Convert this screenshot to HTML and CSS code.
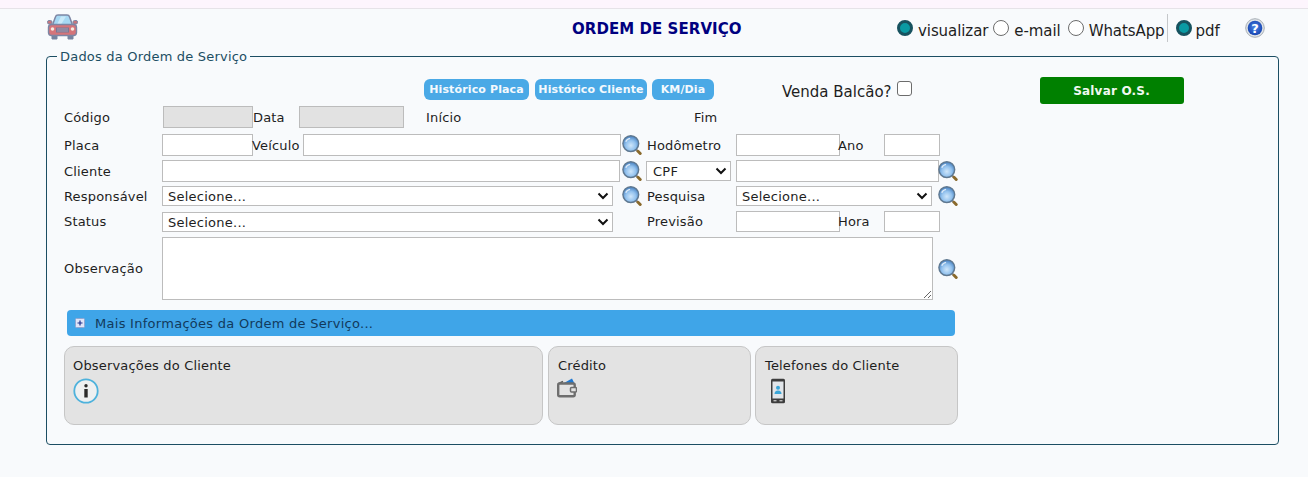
FILE: index.html
```html
<!DOCTYPE html>
<html lang="pt-BR">
<head>
<meta charset="utf-8">
<title>Ordem de Serviço</title>
<link rel="stylesheet" href="styles.css">
</head>
<body>
<svg class="defs" width="0" height="0" aria-hidden="true">
  <defs>
    <radialGradient id="lens" cx="50%" cy="62%" r="58%">
      <stop offset="0" stop-color="#cfe6fa"/>
      <stop offset=".55" stop-color="#93c2ee"/>
      <stop offset="1" stop-color="#4a83c2"/>
    </radialGradient>
    <radialGradient id="helpball" cx="50%" cy="45%" r="55%">
      <stop offset="0" stop-color="#4a86e8"/>
      <stop offset="1" stop-color="#1744b0"/>
    </radialGradient>
    <symbol id="mag" viewBox="0 0 20 20">
      <path d="M13.500 14l2 2" stroke="#8d8d8d" stroke-width="2.400" fill="none"/>
      <path d="M16 16.300l2.200 2.200" stroke="#8a6a2c" stroke-width="3" stroke-linecap="round" fill="none"/>
      <circle cx="8.800" cy="8.600" r="7.900" fill="url(#lens)" stroke="#5f7890" stroke-width="1.400"/>
      <path d="M3.700 6.800a5.600 5.600 0 0 1 4.400-3.400" stroke="#eef7fe" stroke-width="1.300" fill="none" opacity=".85"/>
    </symbol>
  </defs>
</svg>
<div class="strip"></div>
<header class="top">
  <svg class="car" width="31" height="26" viewBox="0 0 31 26">
    <path d="M5 25h5v-4H5zM21 25h5v-4h-5z" fill="#76839f" stroke="#76839f"/>
    <path d="M5.500 11 8.500 2.800Q9 1 11 1h9q2 0 2.500 1.800L25.500 11z" fill="#a6d8f3" stroke="#7d86a4" stroke-width="1.500"/>
    <path d="M10 10.500l4-8h5l-5 8z" fill="#c9e9f9"/>
    <rect x="0.500" y="6.500" width="4.500" height="3.500" rx="1.500" fill="#c8767c" stroke="#7d86a4"/>
    <rect x="26" y="6.500" width="4.500" height="3.500" rx="1.500" fill="#c8767c" stroke="#7d86a4"/>
    <rect x="1.500" y="10.500" width="28" height="11" rx="3" fill="#d4747a" stroke="#7d86a4" stroke-width="1.400"/>
    <rect x="9" y="13.500" width="13" height="5" fill="#7b7693"/>
    <path d="M10 15h11M10 17h11" stroke="#b3a6b6" stroke-width=".8"/>
    <circle cx="5.500" cy="15" r="1.800" fill="#f6eadf"/>
    <circle cx="25.500" cy="15" r="1.800" fill="#f6eadf"/>
  </svg>
  <h1 class="title">ORDEM DE SERVIÇO</h1>
  <div class="modes">
    <label class="mode m-vis"><input type="radio" name="saida" checked>visualizar</label>
    <label class="mode m-mail"><input type="radio" name="saida">e-mail</label>
    <label class="mode m-whats"><input type="radio" name="saida">WhatsApp</label>
    <span class="sep"></span>
    <label class="mode m-pdf"><input type="radio" name="formato" checked>pdf</label>
    <svg class="help" width="20" height="20" viewBox="0 0 20 20">
      <circle cx="10" cy="10" r="9.300" fill="#dfe3e7" stroke="#a8afb6"/>
      <circle cx="10" cy="10" r="7.300" fill="url(#helpball)"/>
      <text x="10" y="14.500" text-anchor="middle" class="help-q">?</text>
    </svg>
  </div>
</header>
<main class="page">
  <fieldset class="box">
    <legend>Dados da Ordem de Serviço</legend>
    <div class="actions">
      <button class="pill p1" type="button">Histórico Placa</button>
      <button class="pill p2" type="button">Histórico Cliente</button>
      <button class="pill p3" type="button">KM/Dia</button>
      <label class="balcao">Venda Balcão?<input type="checkbox"></label>
      <button class="save" type="button">Salvar O.S.</button>
    </div>
    <div class="row r-codigo">
      <label>Código</label><input class="off" disabled>
      <label>Data</label><input class="off" disabled>
      <label class="ini">Início</label><label>Fim</label>
    </div>
    <div class="row r-placa">
      <label>Placa</label><input class="w91">
      <label>Veículo</label><input>
      <svg class="mag"><use href="#mag"/></svg>
      <label class="shift">Hodômetro</label><input class="w104">
      <label class="back">Ano</label><input>
    </div>
    <div class="row r-cliente">
      <label>Cliente</label><input>
      <svg class="mag mag-a"><use href="#mag"/></svg>
      <select class="tiny"><option>CPF</option></select>
      <span></span>
      <input>
      <svg class="mag mag-b"><use href="#mag"/></svg>
    </div>
    <div class="row r-resp">
      <label>Responsável</label><select><option>Selecione...</option></select>
      <span></span>
      <svg class="mag"><use href="#mag"/></svg>
      <label>Pesquisa</label><select><option>Selecione...</option></select>
      <span></span>
      <svg class="mag"><use href="#mag"/></svg>
    </div>
    <div class="row r-status">
      <label class="up">Status</label><select><option>Selecione...</option></select>
      <span></span>
      <label class="up">Previsão</label><input class="w104 tall">
      <label class="up back">Hora</label><input class="tall">
    </div>
    <div class="row r-obs">
      <label>Observação</label><textarea></textarea>
      <span></span>
      <svg class="mag"><use href="#mag"/></svg>
    </div>
    <div class="more">
      <svg class="plus" width="10" height="10" viewBox="0 0 10 10">
        <rect x=".5" y=".5" width="9" height="9" rx="1" fill="#dfe5f8" stroke="#8ea6d2"/>
        <path d="M2.500 5h5M5 2.500v5" stroke="#1c2f8c" stroke-width="1.200"/>
      </svg>
      <span class="more-text">Mais Informações da Ordem de Serviço...</span>
    </div>
    <div class="cards">
      <section class="card c-obs">
        <h2>Observações do Cliente</h2>
        <svg width="26" height="26" viewBox="0 0 26 26">
          <circle cx="13" cy="13" r="11.700" fill="#eef0f1" stroke="#4eb2dc" stroke-width="1.800"/>
          <circle cx="13" cy="7.800" r="1.700" fill="#2b2b2b"/>
          <rect x="11.300" y="11" width="3.400" height="8.500" fill="#2b2b2b"/>
        </svg>
      </section>
      <section class="card c-credit">
        <h2>Crédito</h2>
        <svg width="20" height="20" viewBox="0 0 20 20">
          <path d="M7 5 15 0.500 17.500 5.500H7z" fill="#1f78d1"/>
          <path d="M1 6 6 3.500" stroke="#555" stroke-width="1.600"/>
          <rect x="1.200" y="5.500" width="16.500" height="12.800" rx="1.500" fill="#e3e3e3" stroke="#6e6e6e" stroke-width="2.400"/>
          <rect x="13.500" y="9.500" width="6" height="4.500" rx="1" fill="#e3e3e3" stroke="#6e6e6e" stroke-width="1.500"/>
        </svg>
      </section>
      <section class="card">
        <h2>Telefones do Cliente</h2>
        <svg class="phone" width="16" height="26" viewBox="0 0 16 26">
          <rect x="1" y="0.800" width="14" height="24.400" rx="1.500" fill="#3d3d3d"/>
          <rect x="2.500" y="3.500" width="11" height="17" fill="#e2e6ea"/>
          <circle cx="8" cy="9.800" r="2" fill="#3aa6d8"/>
          <path d="M4.500 16q0-3.500 3.500-3.500t3.500 3.500z" fill="#3aa6d8"/>
          <rect x="3.500" y="22" width="3" height="1.400" fill="#bbb"/>
          <rect x="9.500" y="22" width="3" height="1.400" fill="#bbb"/>
        </svg>
      </section>
    </div>
  </fieldset>
</main>
</body>
</html>
```
FILE: styles.css
```css
* { box-sizing: border-box; }
html, body { margin: 0; height: 100%; }
body {
  background: #f8fafc;
  color: #1e1e1e;
  font: 13px/16px "DejaVu Sans", Verdana, sans-serif;
  letter-spacing: .17px;
  overflow: hidden;
}
.defs { position: absolute; }
.strip { height: 9px; background: #fdf5fd; border-bottom: 1px solid #e6e3e8; }

.top { height: 38px; display: flex; padding-left: 47px; }
.car { margin-top: 5px; flex: none; }
.title {
  flex: none;
  width: 171px;
  margin: 11px 0 0 494px;
  color: #000080;
  font-size: 15px;
  line-height: 18px;
  font-weight: bold;
  letter-spacing: .06px;
  white-space: nowrap;
}
.modes { display: flex; align-items: flex-start; margin-left: 154px; font-size: 15px; line-height: 18px; letter-spacing: -.08px; color: #1e1e1e; }
.mode { display: flex; margin-top: 13px; white-space: nowrap; }
.mode input {
  appearance: none;
  flex: none;
  width: 16px;
  height: 16px;
  margin: -2px 5px 0 0;
  border-radius: 50%;
  border: 1px solid #6c6c6c;
  background: #fff;
}
.mode input:checked { border: 3px solid #17525f; background: #0a9aa3; }
.m-mail { margin-left: 5px; }
.m-whats { margin-left: 7px; }
.sep { width: 1px; height: 28px; margin: 5px 8px 0 2px; background: #c5c7ca; }
.m-pdf input { margin-right: 4px; }
.help { margin: 9px 0 0 25px; flex: none; }
.help-q { font: bold 13px "DejaVu Sans", sans-serif; fill: #fff; }

.page { padding: 0 29px 0 46px; }
.box {
  margin: 0;
  min-width: 0;
  padding: 11px 17px 19px;
  border: 1px solid #1c4e63;
  border-radius: 4px;
}
.box legend {
  margin-left: -7px;
  padding: 1px 3px 0;
  color: #1c4e63;
  line-height: 18px;
  letter-spacing: .2px;
}

.actions { display: flex; align-items: flex-start; height: 29px; }
.pill {
  height: 21px;
  margin: 2px 0 0 0;
  padding: 1px 0 0;
  border: 0;
  border-radius: 6px;
  background: #4aa9e6;
  color: #f4f9fd;
  font: bold 11px/20px "DejaVu Sans", sans-serif;
  letter-spacing: .13px;
  white-space: nowrap;
}
.p1 { width: 105px; margin-left: 360px; }
.p2 { width: 112px; margin-left: 6px; }
.p3 { width: 62px; margin-left: 5px; }
.balcao { display: flex; margin: 6px 0 0 68px; font-size: 15px; line-height: 18px; letter-spacing: 0; white-space: nowrap; }
.balcao input {
  appearance: none;
  width: 15px;
  height: 15px;
  margin: -2px 0 0 5px;
  border: 1px solid #6c6c6c;
  border-radius: 3px;
  background: #fff;
}
.save {
  width: 144px;
  height: 27px;
  margin-left: 128px;
  padding: 1px 0 0;
  border: 0;
  border-radius: 3px;
  background: #008000;
  color: #f0f8f0;
  font: bold 12px/26px "DejaVu Sans", sans-serif;
  letter-spacing: .2px;
}

.row { display: grid; align-items: center; }
.row label { margin-top: 2px; white-space: nowrap; }
.row input, .row select, .row textarea {
  width: 100%;
  margin: 0;
  border: 1px solid #bcbcbc;
  border-radius: 0;
  background: #fff;
  color: #1e1e1e;
  font: 13px/16px "DejaVu Sans", sans-serif;
  letter-spacing: .25px;
}
.row input { height: 22px; padding: 0 3px; }
.row select {
  appearance: none;
  height: 20px;
  padding: 2px 20px 0 5px;
  background: #fff url("data:image/svg+xml,%3Csvg xmlns='http://www.w3.org/2000/svg' width='12' height='8'%3E%3Cpath d='M1.500 1.500 6 6l4.500-4.500' fill='none' stroke='%23111' stroke-width='2'/%3E%3C/svg%3E") no-repeat right 3px center;
}
.row select.tiny { padding-left: 6px; }
.row textarea { display: block; height: 63px; }
.row input.off { background: #e2e2e2; }
.row input.w91 { width: 91px; }
.row input.w104 { width: 104px; }
.row input.tall { height: 21px; margin-top: -1px; }
.mag { width: 20px; height: 20px; display: block; }
.row .up { margin-top: 0; }
.row .shift { margin-left: 1px; }
.row .back { margin-left: -1px; }

.r-codigo { height: 22px; grid-template-columns: 99px 90px 46px 105px 22px 268px 60px; }
.ini { grid-column: 6; }
.r-placa { height: 22px; margin-top: 6px; grid-template-columns: 98px 90px 51px 318px 25px 90px 103px 45px 56px; }
.r-placa .mag { margin-left: 1px; }
.r-cliente { height: 22px; margin-top: 4px; grid-template-columns: 98px 458px 26px 85px 5px 203px 20px; }
.mag-a { margin-left: 2px; }
.mag-b { margin-left: -1px; }
.r-resp { height: 20px; margin-top: 4px; grid-template-columns: 98px 451px 9px 25px 89px 196px 6px 20px; }
.r-status { height: 20px; margin-top: 6px; grid-template-columns: 98px 451px 34px 89px 103px 45px 56px; }
.r-obs { height: 63px; margin-top: 5px; grid-template-columns: 98px 771px 5px 20px; }
.row.r-obs label { margin-top: 0; }

.more {
  display: flex;
  align-items: center;
  width: 888px;
  height: 26px;
  margin: 10px 0 0 3px;
  padding-left: 8px;
  border-radius: 4px;
  background: #3fa5e8;
  color: #123a5c;
}
.plus { margin-right: 10px; flex: none; }
.more-text { margin-top: 2px; letter-spacing: .28px; }

.cards { display: flex; gap: 4px; margin-top: 10px; }
.card {
  flex: none;
  width: 203px;
  height: 79px;
  padding: 11px 8px 0 9px;
  border: 1px solid #c6c6c6;
  border-radius: 10px;
  background: #e3e3e3;
}
.card h2 { margin: 0 0 4px; font-size: 13px; line-height: 16px; font-weight: normal; }
.card svg { display: block; }
.c-obs { width: 479px; margin-right: 1px; padding-left: 8px; }
.c-credit svg { margin-left: -1px; }
.phone { margin-left: 5px; }
```
